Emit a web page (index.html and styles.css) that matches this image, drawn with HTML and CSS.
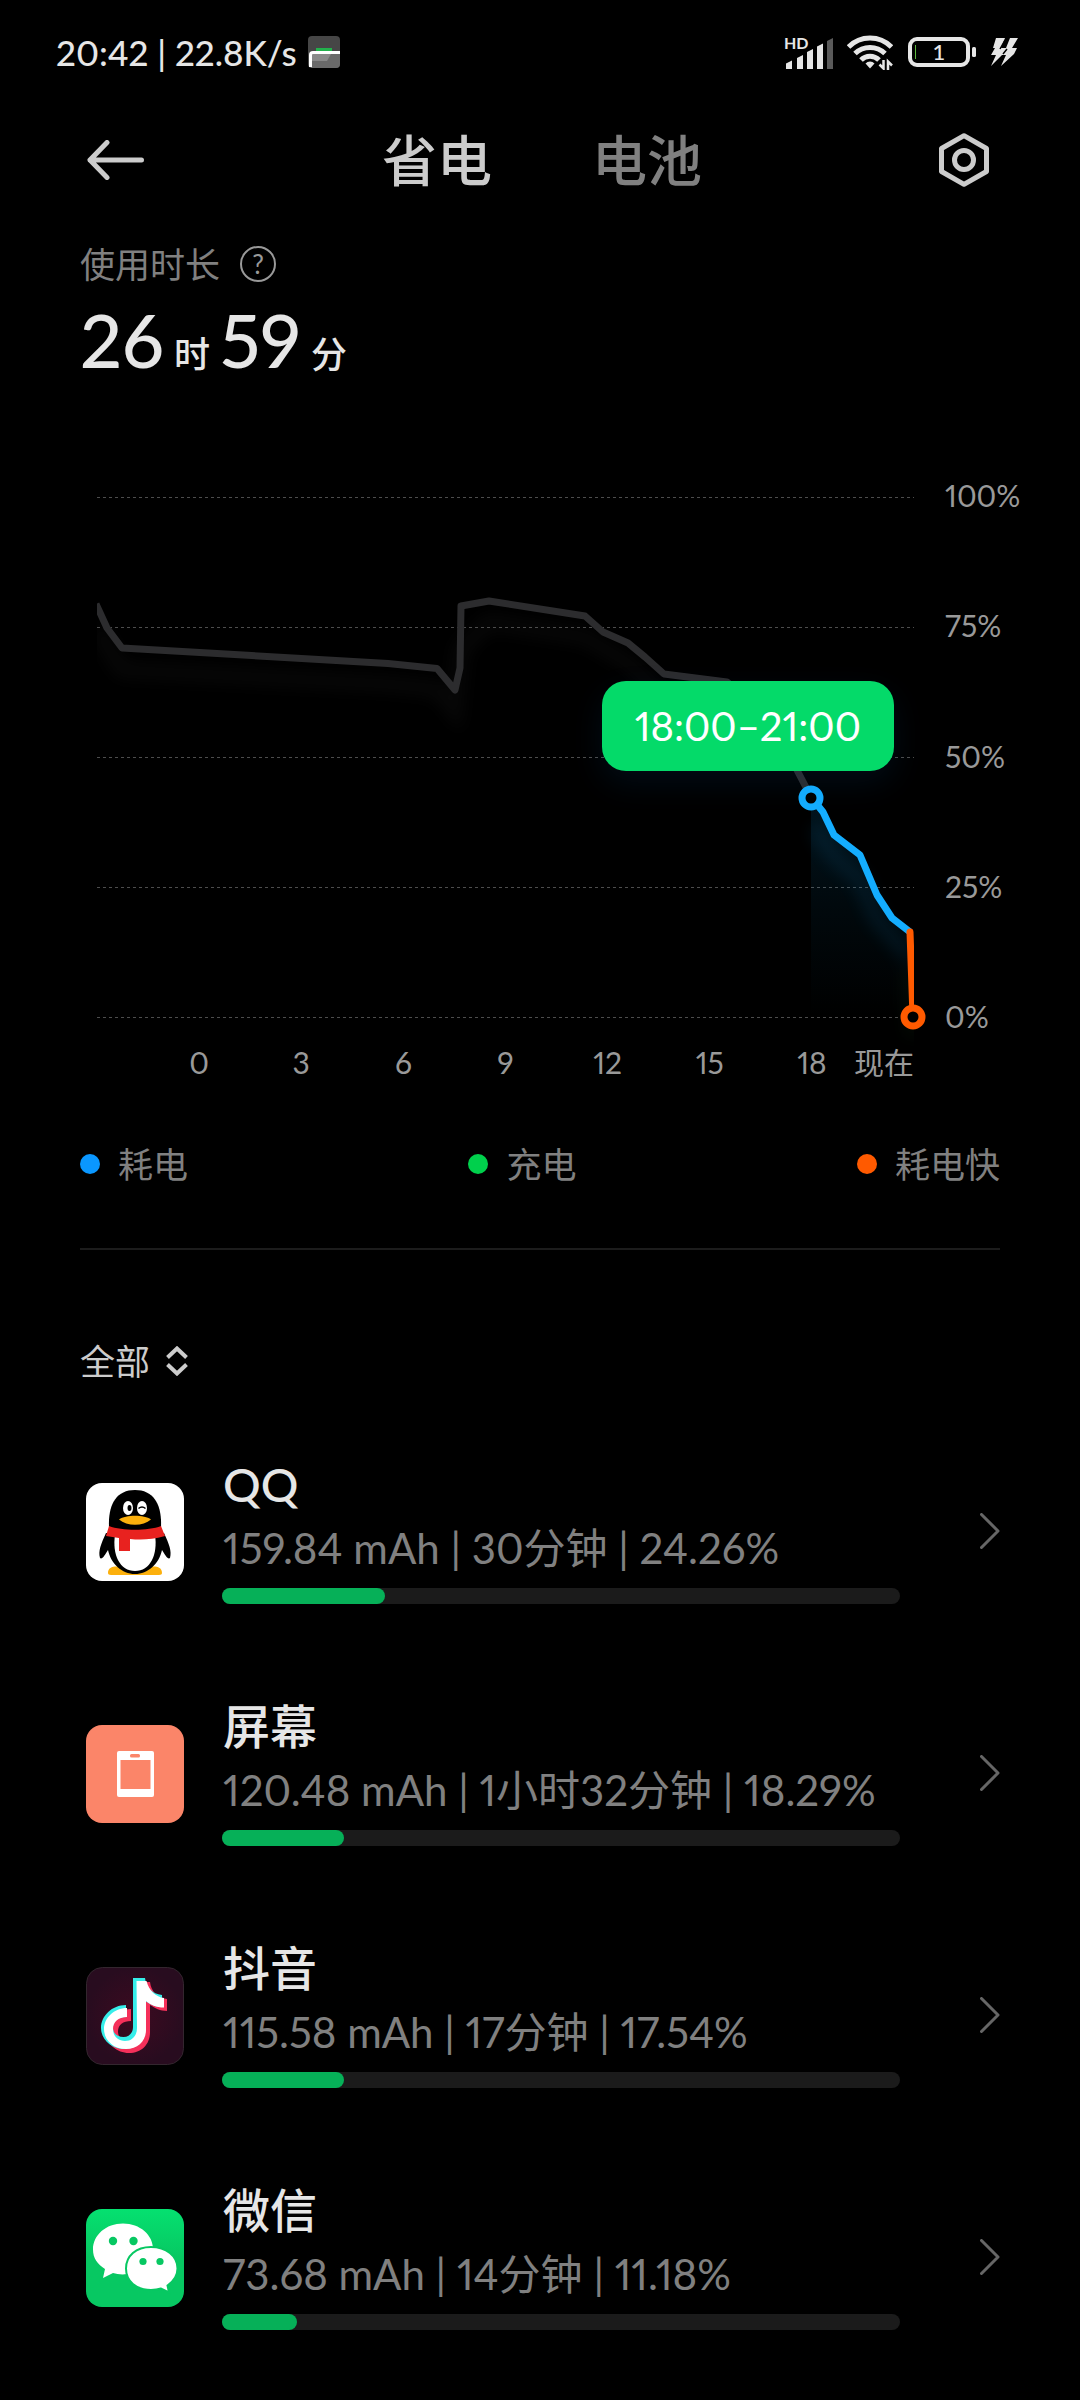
FILE: index.html
```html
<!DOCTYPE html>
<html lang="zh-CN">
<head>
<meta charset="utf-8">
<meta name="viewport" content="width=device-width, initial-scale=1">
<title>省电</title>
<link rel="stylesheet" href="styles.css">
</head>
<body>
<div class="status">
  <span class="status-text">20:42 | 22.8K/s</span>
  <svg class="status-app" width="32" height="32" viewBox="0 0 32 32" aria-hidden="true">
    <rect width="32" height="32" rx="4" fill="#464646"/>
    <path d="M3 17H32V28a4 4 0 0 1-4 4H3z" fill="#6a6a6a"/>
    <path d="M4 18H23L19 25H4z" fill="#8a8a8a"/>
    <rect x="8" y="12" width="16" height="3" fill="#22b14c"/>
    <path d="M2.500 31V19q0-2.500 2.500-2.500H32" fill="none" stroke="#fff" stroke-width="3"/>
  </svg>
  <svg class="status-signal" width="52" height="36" viewBox="0 0 52 36" aria-hidden="true">
    <text x="1" y="15" class="hd">HD</text>
    <g fill="#e6e6e6">
      <path d="M3 35V29.500L9 26.500V35z"/><path d="M14 35V24l6-3V35z"/><path d="M24 35V18l6-3V35z"/><path d="M34 35V12.500l6-3V35z"/>
    </g>
    <path d="M44 35V7l6-3V35z" fill="#5a5a5a"/>
  </svg>
  <svg class="status-wifi" width="46" height="36" viewBox="0 0 46 36" aria-hidden="true">
    <g fill="none" stroke="#e6e6e6" stroke-width="5">
      <path d="M1.500 13a30 30 0 0 1 43 0"/><path d="M8 19.500a21.500 21.500 0 0 1 30 0"/><path d="M14 26a12.500 12.500 0 0 1 18 0"/>
    </g>
    <path d="M23 34.500l-4.500-5a6 6 0 0 1 9 0z" fill="#e6e6e6"/>
    <path d="M36.500 25.500v9.500l-5-5M40.500 36v-9.500l5 5" fill="none" stroke="#000" stroke-width="5"/>
    <path d="M36.500 26v8.500l-4-4M41 36v-8.500l4 4" fill="none" stroke="#e6e6e6" stroke-width="2.500"/>
  </svg>
  <svg class="status-battery" width="68" height="32" viewBox="0 0 68 32" aria-hidden="true">
    <rect x="2" y="3" width="58" height="26" rx="7" fill="none" stroke="#e6e6e6" stroke-width="4"/>
    <rect x="7" y="9" width="1" height="14" fill="#5cb83c"/>
    <rect x="64" y="11" width="4" height="10" rx="1.500" fill="#e6e6e6"/>
    <text x="31" y="24" text-anchor="middle" class="level">1</text>
  </svg>
  <svg class="status-bolt" width="28" height="30" viewBox="0 0 28 30" aria-hidden="true">
    <path d="M6 1h9L11 11h5l4-10h8l-6 10h5L24 17 11 29l5-11H12L1 29 6 18H1l4-7H3z" fill="#e6e6e6"/>
    <path d="M15 3L10 12M13 17l4-5" stroke="#000" stroke-width="1.500"/>
  </svg>
</div>

<header class="header">
  <button class="icon-button" type="button" aria-label="返回">
    <svg width="58" height="40" viewBox="0 0 58 40"><path d="M20 2.500L3 20l17 17.500M3 20H54.500" fill="none" stroke="#ccc" stroke-width="5" stroke-linecap="round" stroke-linejoin="round"/></svg>
  </button>
  <nav class="tabs">
    <button class="tab tab-active" type="button">省电</button>
    <button class="tab" type="button">电池</button>
  </nav>
  <button class="icon-button" type="button" aria-label="设置">
    <svg width="50" height="54" viewBox="0 0 50 54" fill="none" stroke="#ccc" stroke-width="5"><path d="M25 2.700L47.500 15.500V38.500L25 51.300 2.500 38.500V15.500z" stroke-linejoin="round"/><circle cx="25" cy="27" r="9.500"/></svg>
  </button>
</header>

<main>
  <section class="usage">
    <div class="usage-label">使用时长 <button class="help" type="button" aria-label="帮助">?</button></div>
    <p class="usage-time"><b>26</b><span>时</span><b>59</b><span>分</span></p>
  </section>

  <section class="chart">
    <div class="plot">
      <svg class="plot-svg" viewBox="0 0 817 521" aria-hidden="true">
        <defs>
          <clipPath id="area"><rect x="0" y="-20" width="817" height="570"/></clipPath>
          <linearGradient id="fade" x1="0" y1="0" x2="0" y2="1"><stop offset="0" stop-color="#14adff" stop-opacity=".12"/><stop offset=".5" stop-color="#14adff" stop-opacity=".05"/><stop offset="1" stop-color="#14adff" stop-opacity="0"/></linearGradient>
          <filter id="soft" x="-20%" y="-20%" width="140%" height="150%"><feGaussianBlur stdDeviation="8"/></filter>
        </defs>
        <g class="gridlines"><path d="M0 .5H817"/><path d="M0 130.500H817"/><path d="M0 260.500H817"/><path d="M0 390.500H817"/><path d="M0 520.500H817"/></g>
        <g clip-path="url(#area)">
          <path d="M714 300L726 315 737 338 763 358 780 398 795 421 813 435V520H714z" fill="url(#fade)"/>
          <g fill="none" stroke-width="16" filter="url(#soft)" opacity=".09">
            <path d="M0 132L25 173 291 187 340 192 358 215 364 152 392 125 488 140 531 166 567 199 675 222" stroke="#555"/>
            <path d="M718 330L737 360 763 382 780 422 813 460" stroke="#14adff"/>
            <path d="M813 470L816 540" stroke="#2f7030"/>
          </g>
          <g fill="none" stroke-width="7" stroke-linejoin="round">
            <path d="M-1 107L10 131 25 151 291 166.500 340 171.500 358 193 363 171 364 109 392 104 488 119 506 135 531 146 548 160 567 177 630 185 675 222 701 275 714 300" stroke="#2c2c2e"/>
            <path d="M714 300L726 315 737 338 763 358 780 398 795 421 813 435" stroke="#14adff"/>
            <path d="M813 435L816 520" stroke="#ff5a00" stroke-linecap="round"/>
          </g>
        </g>
        <g fill="#000" stroke-width="7"><circle cx="714" cy="301" r="9" stroke="#14adff"/><circle cx="816" cy="520" r="9" stroke="#ff5a00"/></g>
      </svg>
      <div class="tooltip">18:00–21:00</div>
    </div>
    <div class="y-axis"><span>100%</span><span>75%</span><span>50%</span><span>25%</span><span>0%</span></div>
    <div class="x-axis"><span class="first">0</span><span>3</span><span>6</span><span>9</span><span>12</span><span>15</span><span>18</span><span class="now">现在</span></div>
  </section>

  <ul class="legend">
    <li><i class="dot dot-drain"></i>耗电</li>
    <li><i class="dot dot-charge"></i>充电</li>
    <li><i class="dot dot-fast"></i>耗电快</li>
  </ul>

  <div class="filter">
    <select class="filter-select" aria-label="筛选"><option>全部</option></select>
    <svg width="22" height="30" viewBox="0 0 22 30" fill="none" stroke="#ccc" stroke-width="4" aria-hidden="true"><path d="M1.500 11.500L11 2.500l9.500 9M1.500 18.500L11 27.500l9.500-9"/></svg>
  </div>

  <ul class="apps">
    <li><a class="app" href="#qq">
      <svg class="app-icon" viewBox="0 0 98 98" aria-hidden="true">
        <rect width="98" height="98" rx="16" fill="#fff"/>
        <path d="M22 90c0-9 13-7 27-3 14-4 27-6 27 3 0 1-1 2-3 2H25c-2 0-3-1-3-2z" fill="#fcb00c"/>
        <path d="M20 50C15 61 12 68 14 75c2 2 5-3 8-8 3 14 14 24 27 24s24-10 27-24c3 5 6 10 8 8 2-7-1-14-6-25z" fill="#000"/>
        <path d="M23 44C22 22 30 7 49 7s27 15 26 37c-10 8-42 8-52 0z" fill="#000"/>
        <path d="M29 52H69c3 20-5 36-20 36S26 72 29 52z" fill="#fff"/>
        <path d="M23 43c13 5 39 5 52 0l4 10c-14 4-25 4-35 3v12H33V55l-13-2z" fill="#e8221f"/>
        <ellipse cx="42" cy="25" rx="5" ry="7" fill="#fff"/><ellipse cx="56" cy="25" rx="5" ry="7" fill="#fff"/>
        <ellipse cx="43.500" cy="25" rx="2" ry="3" fill="#000"/><path d="M52.500 25.500q3.500-3 7 0" fill="none" stroke="#000" stroke-width="1.500"/>
        <path d="M33 36.500c7-5 25-5 32 0-8 7-24 7-32 0z" fill="#fcb00c"/>
      </svg>
      <div class="app-body"><h2>QQ</h2><p>159.84 mAh | 30分钟 | 24.26%</p><div class="bar"><div class="bar-fill" style="width:24%"></div></div></div>
      <svg class="chevron" viewBox="0 0 20 36" aria-hidden="true"><path d="M1.500 1.500L18 18 1.500 34.500"/></svg>
    </a></li>
    <li><a class="app" href="#screen">
      <svg class="app-icon" viewBox="0 0 98 98" aria-hidden="true">
        <rect width="98" height="98" rx="16" fill="#fb8569"/>
        <rect x="31" y="26" width="37" height="46" rx="2" fill="#fff"/><rect x="34.500" y="35" width="30" height="29" fill="#fb8569"/><rect x="44" y="29" width="10" height="3.500" rx="1.500" fill="#fb8569"/>
      </svg>
      <div class="app-body"><h2>屏幕</h2><p>120.48 mAh | 1小时32分钟 | 18.29%</p><div class="bar"><div class="bar-fill" style="width:18%"></div></div></div>
      <svg class="chevron" viewBox="0 0 20 36" aria-hidden="true"><path d="M1.500 1.500L18 18 1.500 34.500"/></svg>
    </a></li>
    <li><a class="app" href="#douyin">
      <svg class="app-icon" viewBox="0 0 98 98" aria-hidden="true">
        <defs>
          <radialGradient id="dy"><stop offset="0" stop-color="#3d0a20"/><stop offset="1" stop-color="#280c1f"/></radialGradient>
          <path id="note" d="M48 12H60C61 21 67 28 77 29V41C70 41 65 38 60 35V62C60 75 51 83 39 83S16 74 16 62 27 39 41 39V51C33 51 28 55 28 61.500S33 71 38.500 71 48 67 48 61z"/>
        </defs>
        <rect x=".5" y=".5" width="97" height="97" rx="16" fill="url(#dy)" stroke="#33262e"/>
        <use href="#note" x="4" y="3" fill="#f5305a"/><use href="#note" x="-1" y="-1" fill="#36eeea"/>
        <path d="M50.500 14H60.500C63 24 70 30 78 31V40.500C70 40.500 65 38 60 34V63C60 74 52 82 40 82 27 82 18 73 18 62S28 41 41 41V50C32 50 27 55 27 62S32 74 39 74 51 69 51 61z" fill="#fff"/>
      </svg>
      <div class="app-body"><h2>抖音</h2><p>115.58 mAh | 17分钟 | 17.54%</p><div class="bar"><div class="bar-fill" style="width:18%"></div></div></div>
      <svg class="chevron" viewBox="0 0 20 36" aria-hidden="true"><path d="M1.500 1.500L18 18 1.500 34.500"/></svg>
    </a></li>
    <li><a class="app" href="#wechat">
      <svg class="app-icon" viewBox="0 0 98 98" aria-hidden="true">
        <defs><linearGradient id="wx" x1="0" y1="0" x2="0" y2="1"><stop offset="0" stop-color="#05e070"/><stop offset=".5" stop-color="#07c862"/></linearGradient></defs>
        <rect width="98" height="98" rx="16" fill="url(#wx)"/>
        <path d="M37 14.500C20 14.500 7 26 7 40.500 7 49 11 55 19 60l-2 9 10-5c4 1 9 2 14 1 15-2 26-11 26-25S54 14.500 37 14.500z" fill="#fff"/>
        <path d="M65 38C50 38 40 47 40 59.500S50 81 65 81c4 0 7-.5 10-1.500l8 4-1.500-7C88 72 91.500 66 91.500 59.500 91.500 47 80 38 65 38z" fill="#fff" stroke="#07c862" stroke-width="2"/>
        <g fill="#07c862"><circle cx="27" cy="32" r="4.200"/><circle cx="47.500" cy="32" r="4.200"/><circle cx="57" cy="52.500" r="3.600"/><circle cx="74" cy="52.500" r="3.600"/></g>
      </svg>
      <div class="app-body"><h2>微信</h2><p>73.68 mAh | 14分钟 | 11.18%</p><div class="bar"><div class="bar-fill" style="width:11%"></div></div></div>
      <svg class="chevron" viewBox="0 0 20 36" aria-hidden="true"><path d="M1.500 1.500L18 18 1.500 34.500"/></svg>
    </a></li>
  </ul>
</main>
</body>
</html>
```
FILE: styles.css
```css
* { box-sizing: border-box; margin: 0; padding: 0; }
body { background: #000; color: #e6e6e6; font-family: Lato, "Noto Sans CJK SC", sans-serif; font-variant-numeric: proportional-nums; }
button, select { font: inherit; color: inherit; background: none; border: 0; }
ul { list-style: none; }
svg { display: block; flex: none; }

.status { display: flex; align-items: center; padding: 32px 62px 0 56px; height: 72px; }
.status-text { font-size: 35px; line-height: 40px; font-weight: 500; white-space: nowrap; }
.status-app { margin-left: 11px; }
.status-signal { margin-left: auto; overflow: visible; }
.status-wifi { margin-left: 12px; }
.status-battery { margin-left: 15px; }
.status-bolt { margin-left: 14px; }
.hd { font: bold 16px Lato, sans-serif; fill: #e6e6e6; }
.level { font: 500 22px Lato, sans-serif; fill: #e6e6e6; }

.header { display: flex; align-items: center; justify-content: space-between; margin-top: 48px; padding: 0 91px 0 87px; }
.icon-button { display: flex; }
.tabs { display: flex; gap: 100px; }
.tab { font-size: 55px; line-height: 80px; font-weight: 500; color: #808080; }
.tab-active { color: #ccc; }

.usage { padding: 40px 80px 0; }
.usage-label { display: flex; align-items: center; gap: 20px; font-size: 35px; line-height: 48px; color: #808080; }
.help { width: 36px; height: 36px; border: 2px solid #999; border-radius: 50%; font-size: 26px; line-height: 30px; color: #999; }
.usage-time { display: flex; align-items: baseline; margin-top: 12px; height: 80px; }
.usage-time b { font-size: 74px; line-height: 80px; font-weight: 500; }
.usage-time span { font-size: 36px; line-height: 40px; font-weight: 500; margin: 0 10px; }

.chart { display: grid; grid-template-columns: 1fr 104px; column-gap: 31px; row-gap: 8px; margin: 99px 31px 0 97px; font-size: 30px; line-height: 36px; color: #999; }
.plot { position: relative; padding: 18px 0; }
.plot-svg { width: 100%; height: auto; overflow: visible; }
.gridlines { stroke: #4d4d4d; stroke-width: 1; stroke-dasharray: 3 3; }
.tooltip { position: absolute; top: 202px; right: 20px; padding: 0 33px; border-radius: 24px; background: #04da69; color: #fff; font-size: 40px; line-height: 90px; box-shadow: 0 12px 32px rgba(20, 120, 220, .1); }
.y-axis { display: flex; flex-direction: column; justify-content: space-between; margin: -2px 0 2px; }
.x-axis { display: grid; grid-template-columns: minmax(0, 1fr) repeat(7, minmax(0, 2fr)) minmax(0, 1fr); text-align: center; white-space: nowrap; }
.first { grid-column-start: 2; }
.now { display: flex; justify-content: flex-end; }

.legend { display: flex; justify-content: space-between; margin: 60px 80px 0; padding-bottom: 60px; border-bottom: 2px solid #1c1c1c; font-size: 35px; line-height: 48px; color: #808080; }
.legend li { display: flex; align-items: center; gap: 18px; }
.dot { width: 20px; height: 20px; border-radius: 50%; }
.dot-drain { background: #0a97ff; }
.dot-charge { background: #00d04c; }
.dot-fast { background: #ff5a00; }

.filter { display: flex; align-items: center; gap: 15px; margin: 87px 80px 0; color: #ccc; }
.filter-select { appearance: none; font-size: 35px; line-height: 48px; }

.apps { margin-top: 26px; padding: 0 80px 20px; }
.app { display: flex; padding: 45px 0 49px; color: inherit; text-decoration: none; }
.app-icon { width: 98px; height: 98px; margin: 27px 38px 0 6px; }
.app-body { flex: 1; }
.app-body h2 { font-size: 47px; line-height: 56px; font-weight: 500; padding-left: 1px; }
.app-body p { font-size: 42px; line-height: 56px; margin-top: 8px; padding-left: 1px; color: #808080; white-space: nowrap; }
.bar { height: 16px; margin-top: 12px; border-radius: 8px; background: #1b1b1b; }
.bar-fill { height: 16px; border-radius: 8px; background: #06b058; }
.chevron { width: 20px; height: 36px; margin: 57px 0 0 80px; fill: none; stroke: #666; stroke-width: 3; stroke-linecap: round; stroke-linejoin: round; }
```
